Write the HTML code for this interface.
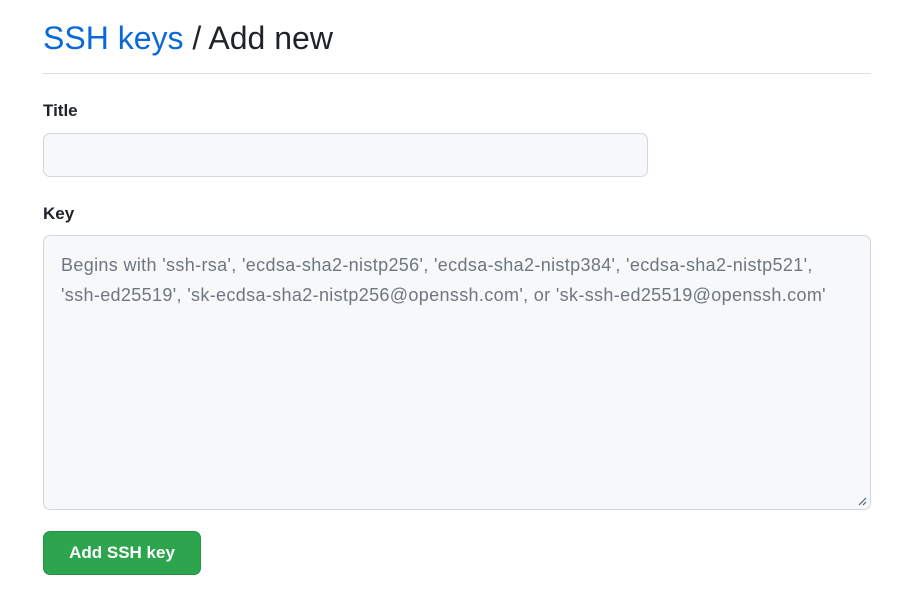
<!DOCTYPE html>
<html><head><meta charset="utf-8"><style>
body{margin:0;background:#fff;font-family:"Liberation Sans",sans-serif;color:#1f2328;}
.wrap{position:absolute;left:43px;top:0;width:828px;}
h1{position:absolute;top:18px;left:0;margin:0;font-weight:400;font-size:32px;line-height:40px;white-space:nowrap;}
h1 a{color:#0969da;text-decoration:none}
.hr{position:absolute;top:73px;left:0;width:828px;height:1px;background:#d8dee4}
.lbl{position:absolute;left:0;font-weight:700;font-size:17px;}
.inp{position:absolute;left:0;background:#f6f8fa;border:1px solid #d0d7de;border-radius:7px;box-sizing:border-box}
.ph{position:absolute;left:17px;top:14px;color:#6e7781;font-size:18px;letter-spacing:0.35px;line-height:30px;white-space:nowrap}
.btn{position:absolute;left:0;top:531px;width:158px;height:44px;background:#2da44e;border:1px solid #298e46;border-radius:7px;box-sizing:border-box;color:#fff;font-weight:700;font-size:17px;text-align:center;line-height:42px}
</style></head><body><div class="wrap">
<h1><a>SSH keys</a> / Add new</h1>
<div class="hr"></div>
<div class="lbl" style="top:101px">Title</div>
<div class="inp" style="top:133px;width:605px;height:44px"></div>
<div class="lbl" style="top:204px">Key</div>
<div class="inp" style="top:235px;width:828px;height:275px">
<div class="ph">Begins with 'ssh-rsa', 'ecdsa-sha2-nistp256', 'ecdsa-sha2-nistp384', 'ecdsa-sha2-nistp521',<br>'ssh-ed25519', 'sk-ecdsa-sha2-nistp256@openssh.com', or 'sk-ssh-ed25519@openssh.com'</div>
<svg style="position:absolute;right:3px;bottom:3px" width="10" height="10"><path d="M9 2L2 9M9 6L6 9" stroke="#57606a" stroke-width="1.2"/></svg>
</div>
<div class="btn">Add SSH key</div>
</div></body></html>
